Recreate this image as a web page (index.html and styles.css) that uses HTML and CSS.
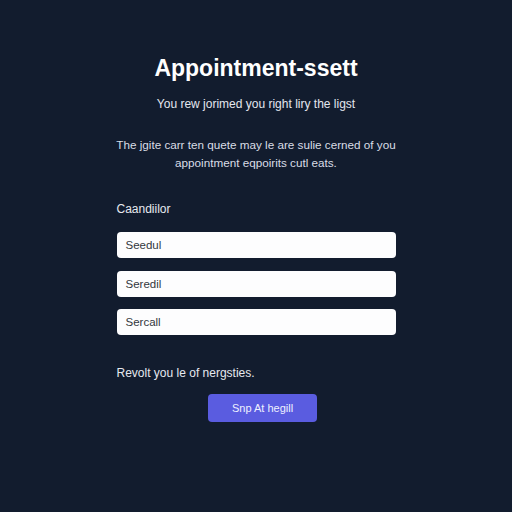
FILE: index.html
```html
<!DOCTYPE html>
<html>
<head>
<meta charset="utf-8">
<link rel="stylesheet" href="styles.css">
</head>
<body>
<main class="page">
  <h1 class="title">Appointment-ssett</h1>
  <p class="subtitle">You rew jorimed you right liry the ligst</p>
  <p class="desc">The jgite carr ten quete may le are sulie cerned of you<br>appointment eqpoirits cutl eats.</p>
  <section class="form">
    <div class="label">Caandiilor</div>
    <div class="field">Seedul</div>
    <div class="field">Seredil</div>
    <div class="field">Sercall</div>
    <p class="note">Revolt you le of nergsties.</p>
    <div class="actions"><button class="btn">Snp At hegill</button></div>
  </section>
</main>
</body>
</html>
```
FILE: styles.css
```css
html, body {
  margin: 0;
  padding: 0;
  background: #121c2e;
  height: 100%;
}
body {
  font-family: "Liberation Sans", Arial, sans-serif;
  color: #e6e9ef;
}
.page {
  width: 512px;
  display: flex;
  flex-direction: column;
  align-items: center;
  padding-top: 54px;
  box-sizing: border-box;
}
.title {
  margin: 0;
  font-size: 23px;
  font-weight: 700;
  color: #ffffff;
  line-height: 28px;
}
.subtitle {
  margin: 14px 0 0;
  font-size: 12px;
  line-height: 16px;
  color: #e4e7ee;
}
.desc {
  margin: 24px 0 0;
  font-size: 11.7px;
  line-height: 18px;
  text-align: center;
  color: #d9dde6;
}
.form {
  width: 279px;
  margin-top: 29px;
  display: flex;
  flex-direction: column;
}
.label {
  font-size: 12px;
  line-height: 16px;
  color: #e6e9ef;
  margin-bottom: 15px;
}
.field {
  height: 26px;
  background: #fdfdfe;
  border-radius: 4px;
  color: #333840;
  font-size: 11.5px;
  line-height: 26px;
  padding-left: 9px;
  margin-bottom: 12.5px;
}
.note {
  margin: 17.5px 0 0;
  font-size: 12px;
  line-height: 16px;
  color: #e6e9ef;
}
.actions {
  display: flex;
  justify-content: center;
  margin-top: 13px;
}
.btn {
  width: 109px;
  height: 28px;
  border: none;
  border-radius: 4px;
  background: #5a5ce0;
  color: #eef0ff;
  font-family: "Liberation Sans", Arial, sans-serif;
  font-size: 11px;
  margin-left: 13px;
}
```
